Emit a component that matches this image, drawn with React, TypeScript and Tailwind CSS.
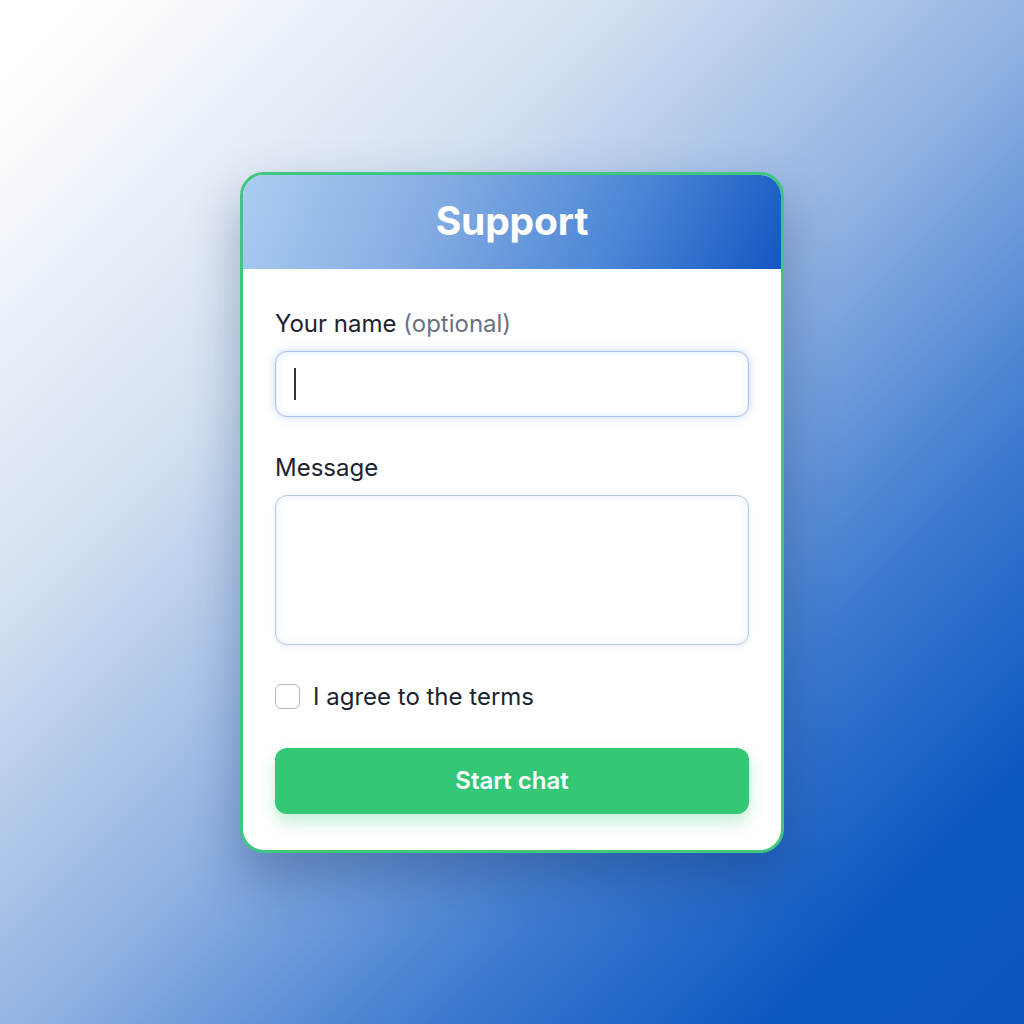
import React from 'react';

function Field({ label, hint, children }: { label: string; hint?: string; children: React.ReactNode }) {
  return (
    <div className="flex flex-col">
      <label className="text-[24px] leading-[28px] text-[#1c2330] mb-[13px]">
        {label}
        {hint && <span className="text-[#6b7280]"> {hint}</span>}
      </label>
      {children}
    </div>
  );
}

export default function App() {
  return (
    <div
      className="w-[1024px] h-[1024px] flex items-center justify-center bg-[linear-gradient(135deg,#ffffff_4%,#d3e0f1_30%,#8fb1e2_52%,#3a78cf_72%,#0b57c0_88%,#0a55bd_100%)]"
      style={{ fontFamily: 'Inter, "Noto Sans", sans-serif' }}
    >
      <div className="w-[544px] rounded-[24px] border-[3px] border-[#3fc67f] bg-white overflow-hidden shadow-[0_24px_50px_rgba(20,50,100,0.35)]">
        <div className="h-[94px] flex items-center justify-center bg-[linear-gradient(115deg,#abcdf1_0%,#85ade3_35%,#4a85d6_70%,#1457c2_100%)]">
          <h1 className="text-[39px] font-bold text-white tracking-[-0.2px]">Support</h1>
        </div>
        <div className="px-[32px] pt-[41px] pb-[36px] flex flex-col">
          <Field label="Your name" hint="(optional)">
            <div className="h-[66px] rounded-[12px] border-[1.5px] border-[#a6c0e8] bg-white shadow-[0_0_10px_rgba(70,130,230,0.3),inset_0_0_6px_rgba(70,130,230,0.15)] flex items-center pl-[18px]">
              <div className="w-[2px] h-[32px] bg-[#333]" />
            </div>
          </Field>
          <div className="mt-[37px]">
            <Field label="Message">
              <div className="h-[150px] rounded-[12px] border-[1.5px] border-[#b9c9e2] bg-white shadow-[0_1px_4px_rgba(70,110,180,0.15),inset_0_0_8px_rgba(70,110,180,0.12)]" />
            </Field>
          </div>
          <div className="mt-[38px] flex items-center h-[28px]">
            <div className="w-[25px] h-[25px] rounded-[6px] border-[1.5px] border-[#b3b8bf] bg-white" />
            <span className="ml-[13px] text-[24px] leading-[28px] text-[#1c2330]">I agree to the terms</span>
          </div>
          <button className="mt-[37px] h-[66px] rounded-[12px] bg-[#34c775] text-white text-[24px] font-semibold shadow-[0_8px_16px_rgba(52,199,117,0.3)]">
            Start chat
          </button>
        </div>
      </div>
    </div>
  );
}
